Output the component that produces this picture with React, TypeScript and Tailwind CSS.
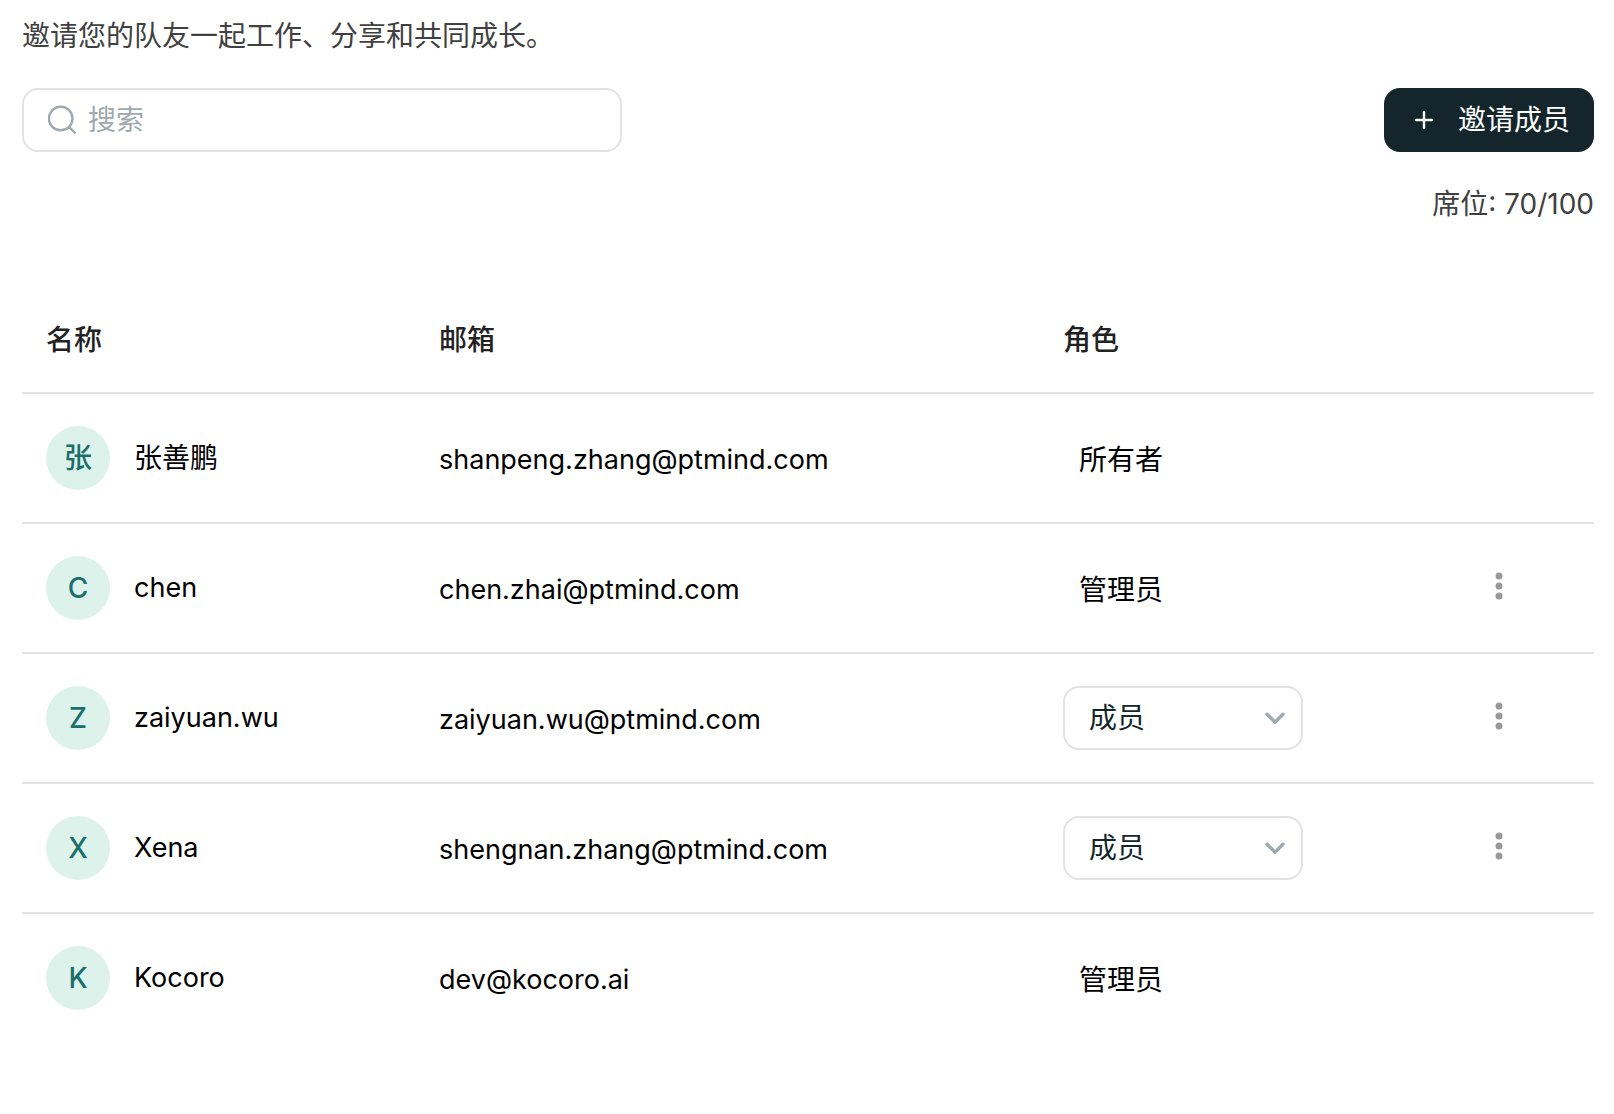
import React, { useState } from "react";

type Member = {
  name: string;
  email: string;
  role: string;
  editable?: boolean;
  menu?: boolean;
};

const members: Member[] = [
  { name: "张善鹏", email: "shanpeng.zhang@ptmind.com", role: "所有者" },
  { name: "chen", email: "chen.zhai@ptmind.com", role: "管理员", menu: true },
  { name: "zaiyuan.wu", email: "zaiyuan.wu@ptmind.com", role: "成员", editable: true, menu: true },
  { name: "Xena", email: "shengnan.zhang@ptmind.com", role: "成员", editable: true, menu: true },
  { name: "Kocoro", email: "dev@kocoro.ai", role: "管理员" },
];

// latin names are set a touch smaller than the chinese ones
const isLatin = (text: string) => /^[\x20-\x7e]+$/.test(text);

function RoleSelect({ member }: { member: Member }) {
  const [role, setRole] = useState(member.role);
  return (
    <div className="relative w-60">
      <select
        aria-label={`${member.name} 角色`}
        value={role}
        onChange={(e) => setRole(e.target.value)}
        className="block h-16 w-full appearance-none rounded-2xl border-2 border-[#e2e2e2] bg-white pl-6 pr-14 text-[#14262b]"
      >
        <option value="成员">成员</option>
        <option value="管理员">管理员</option>
      </select>
      <svg
        className="pointer-events-none absolute right-4 top-5 h-6 w-6"
        viewBox="0 0 24 24"
        fill="none"
        stroke="#9eaaad"
        strokeWidth="3.4"
        strokeLinecap="round"
        strokeLinejoin="round"
      >
        <path d="M4 8.2l8 8 8-8" />
      </svg>
    </div>
  );
}

export default function App() {
  return (
    <main className="min-h-screen bg-white px-5 pt-4 font-[Inter,'Noto_Sans_CJK_SC',sans-serif] text-[28px] leading-10 text-black">
      <p className="px-0.5 text-[#404040]">邀请您的队友一起工作、分享和共同成长。</p>

      <div className="mt-8 flex items-center justify-between pl-0.5">
        <label className="flex h-16 w-[600px] items-center gap-2 rounded-2xl border-2 border-[#e2e2e2] px-6">
          <svg
            className="h-8 w-8 shrink-0"
            viewBox="0 0 32 32"
            fill="none"
            stroke="#9eaaad"
            strokeWidth="2.4"
            strokeLinecap="round"
          >
            <circle cx="12.7" cy="14.5" r="11.8" />
            <path d="M21.2 23.2l5.5 5.5" />
          </svg>
          <input
            type="text"
            aria-label="搜索"
            placeholder="搜索"
            className="min-w-0 flex-1 outline-none placeholder:text-[#9eaaad]"
          />
        </label>
        <button
          type="button"
          className="flex h-16 items-center gap-[22px] rounded-2xl bg-[#14262b] pl-7 pr-6 text-white"
        >
          <svg
            className="h-6 w-6"
            viewBox="0 0 24 24"
            fill="none"
            stroke="currentColor"
            strokeWidth="2.4"
            strokeLinecap="round"
          >
            <path d="M12 4v16M4 12h16" />
          </svg>
          邀请成员
        </button>
      </div>

      <p className="mt-8 text-right text-[#404040]">席位: 70/100</p>

      <div className="mt-16 pl-0.5">
        <table className="w-full table-fixed border-collapse text-left">
          <thead>
            <tr className="h-[105px] border-b-2 border-[#e2e2e2] text-[#222222]">
              <th className="w-1/4 px-6 font-medium">名称</th>
              <th className="px-6 font-medium">邮箱</th>
              <th className="w-[412px] px-6 font-medium">角色</th>
              <th className="w-[143px]" aria-label="操作"></th>
            </tr>
          </thead>
          <tbody>
            {members.map((m) => (
              <tr key={m.email} className="h-[130px] border-b-2 border-[#e2e2e2] last:border-transparent">
                <td className="px-6">
                  <div className="flex items-center gap-6">
                    <span className="flex h-16 w-16 shrink-0 items-center justify-center rounded-full bg-[#def2ec] font-medium text-[#1a6f6d]">
                      {m.name[0].toUpperCase()}
                    </span>
                    <span className={isLatin(m.name) ? "text-[27px]" : ""}>{m.name}</span>
                  </div>
                </td>
                <td className="px-6 pt-1 text-[27px]">{m.email}</td>
                <td className="px-6">
                  {m.editable ? <RoleSelect member={m} /> : <div className="px-4 pt-1">{m.role}</div>}
                </td>
                <td className="px-6">
                  {m.menu && (
                    <button
                      type="button"
                      aria-label={`${m.name} 更多操作`}
                      className="flex h-12 w-12 items-center justify-center"
                    >
                      <svg className="h-8 w-8" viewBox="0 0 32 32" fill="#999999">
                        <circle cx="16" cy="4" r="3.5" />
                        <circle cx="16" cy="14" r="3.5" />
                        <circle cx="16" cy="24" r="3.5" />
                      </svg>
                    </button>
                  )}
                </td>
              </tr>
            ))}
          </tbody>
        </table>
      </div>
    </main>
  );
}
